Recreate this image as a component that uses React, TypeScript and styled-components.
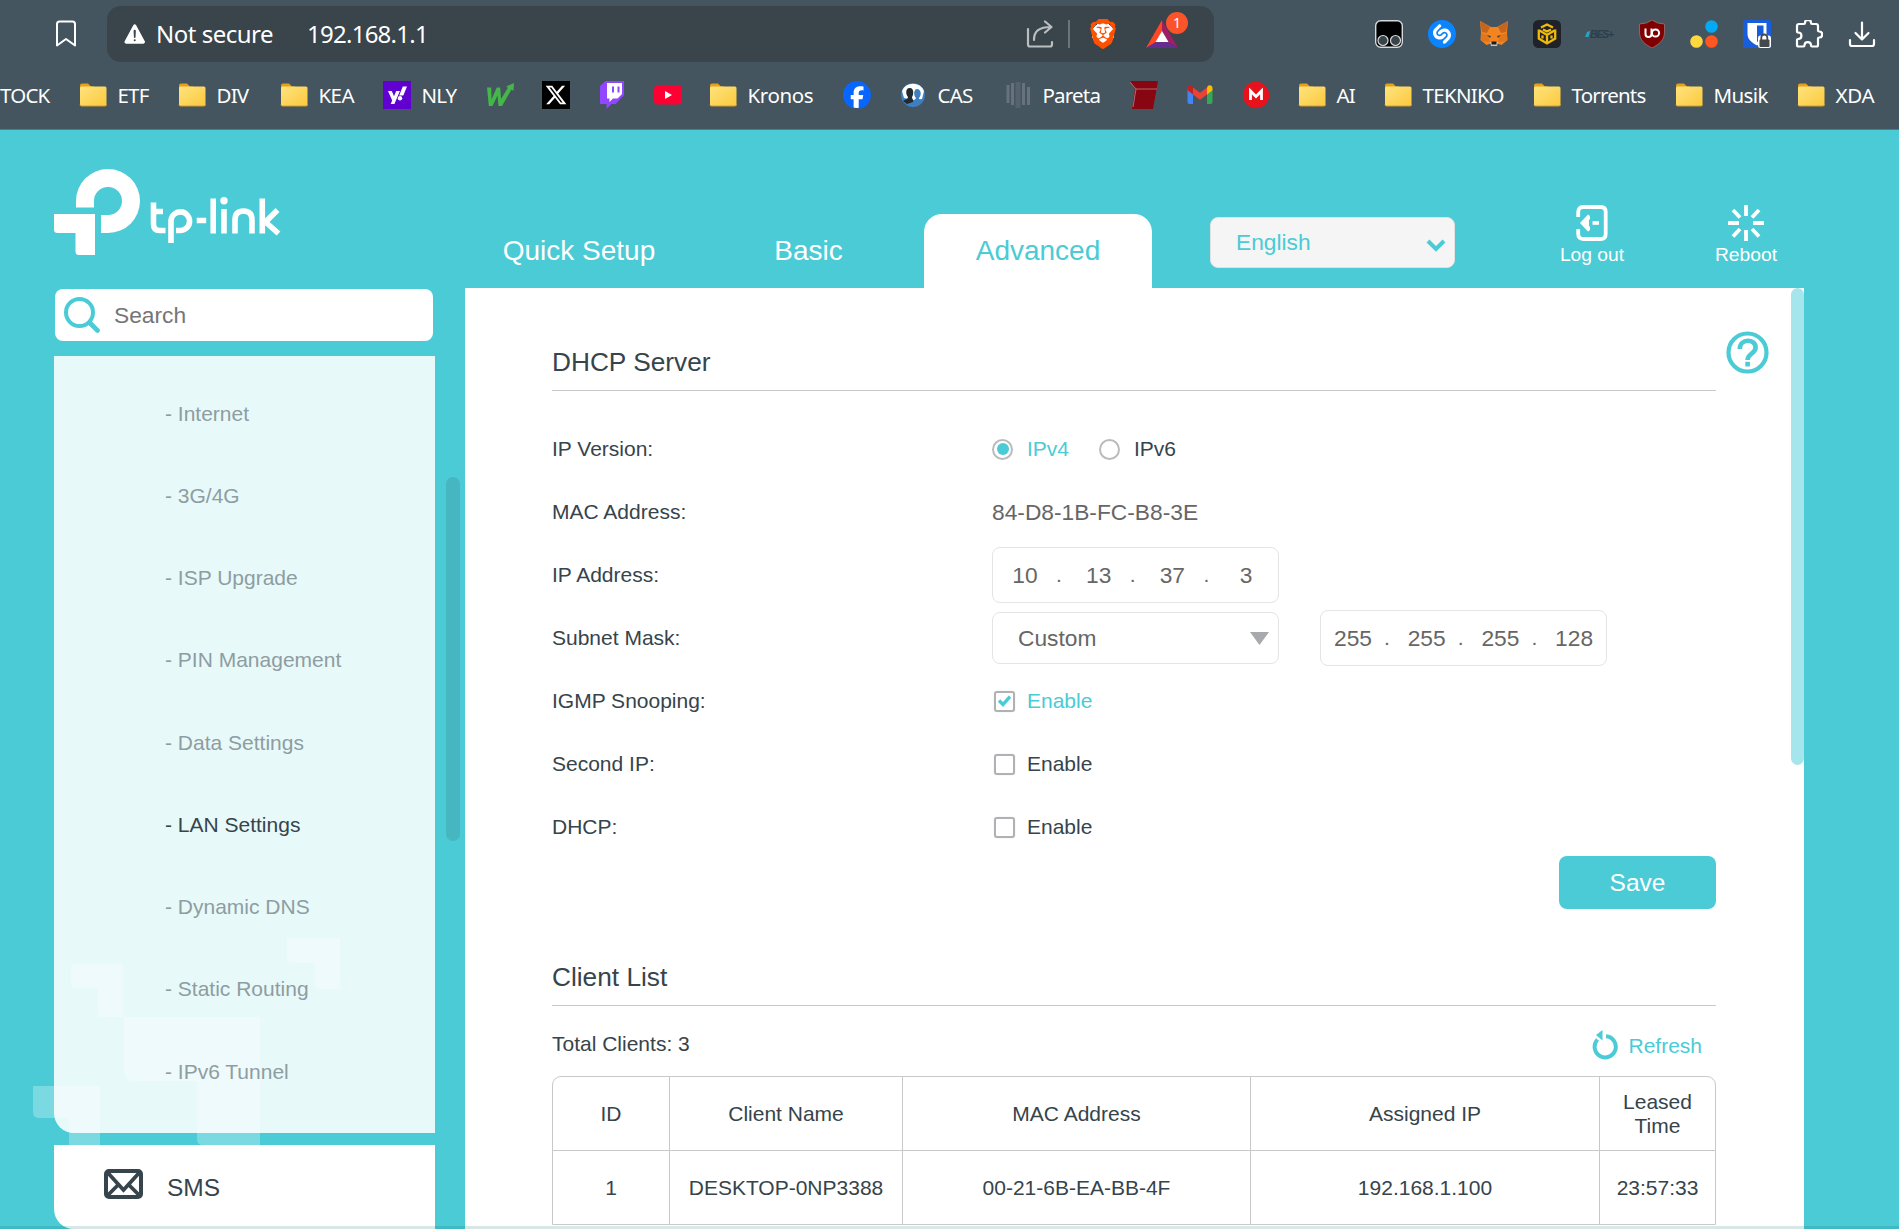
import React from 'react';
import styled, { createGlobalStyle } from 'styled-components';
import { SiBrave, SiShazam } from 'react-icons/si';
import { FaXTwitter, FaFacebook } from 'react-icons/fa6';
import { IoWarning } from 'react-icons/io5';

const teal = '#4acbd6';
const ink = '#36444b';

const Global = createGlobalStyle`
  body { margin: 0; background: ${teal}; overflow: hidden; }
  * { box-sizing: border-box; }
  svg { display: block; }
`;

const Screen = styled.div`
  width: 1899px;
  height: 1229px;
  display: flex;
  flex-direction: column;
  position: relative;
  overflow: hidden;
  background: ${teal};
  font-family: "Liberation Sans", Arial, sans-serif;
  color: ${ink};
`;

/* ---------- browser chrome ---------- */
const Chrome = styled.header`
  height: 130px;
  flex: none;
  background: #44555f;
  border-bottom: 1px solid #647580;
  color: #fff;
  font-family: "Noto Sans", "Open Sans", sans-serif;
`;
const Toolbar = styled.div`
  height: 68px;
  display: flex;
  align-items: center;
  padding-left: 54px;
`;
const AddressBar = styled.div`
  width: 1107px;
  height: 56px;
  margin-left: 29px;
  padding: 0 36px 0 15px;
  border-radius: 14px;
  background: #39444b;
  display: flex;
  align-items: center;
`;
const AddressText = styled.span<{ $gap: number; $fit: number }>`
  margin-left: ${(p) => p.$gap}px;
  font-size: 24px;
  line-height: 30px;
  letter-spacing: ${(p) => p.$fit}px;
  white-space: nowrap;
`;
const AddressActions = styled.div`
  margin-left: auto;
  display: flex;
  align-items: center;
`;
const Divider = styled.i`
  width: 2px;
  height: 28px;
  margin: 0 18px 0 14px;
  background: #69747b;
`;
const Rewards = styled.div`
  position: relative;
  margin-left: 28px;
`;
const Badge = styled.span`
  position: absolute;
  left: 20px;
  top: -8px;
  width: 22px;
  height: 22px;
  border-radius: 50%;
  background: #fb542b;
  font-size: 14px;
  line-height: 22px;
  text-align: center;
`;
const BraveLion = styled(SiBrave)`
  background: radial-gradient(#fff 52%, transparent 54%);
`;
const Extensions = styled.div`
  display: flex;
  align-items: center;
  gap: 24.5px;
  margin-left: 161px;
`;
const Bookmarks = styled.nav`
  height: 54px;
  display: flex;
  align-items: center;
`;
const Bookmark = styled.div<{ $w: number }>`
  width: ${(p) => p.$w}px;
  flex: none;
  display: flex;
  align-items: center;
  white-space: nowrap;
`;
const BookmarkLabel = styled.span<{ $fit: number; $cut?: boolean }>`
  margin-left: ${(p) => (p.$cut ? 0 : 10.5)}px;
  font-size: 20.5px;
  line-height: 28px;
  letter-spacing: ${(p) => p.$fit}px;
`;

/* ---------- router page ---------- */
const Page = styled.div`
  flex: 1;
  min-height: 0;
  display: flex;
  position: relative;
`;
const Backdrop = styled.svg`
  position: absolute;
  left: 0;
  bottom: 0;
`;
const Side = styled.aside`
  width: 465px;
  flex: none;
  padding: 39px 0 0 54px;
  position: relative;
`;
const SearchBox = styled.div`
  width: 378px;
  height: 52px;
  margin: 34px 0 15px 1px;
  padding-left: 9px;
  display: flex;
  align-items: center;
  border-radius: 8px;
  background: #fff;
  color: #757575;
  font-size: 22.75px;
`;
const SearchText = styled.span`
  margin-left: 14px;
`;
const SideScroll = styled.div`
  display: flex;
  width: 406px;
`;
const SubMenu = styled.ul`
  width: 381px;
  height: 777px;
  margin: 0;
  padding: 16.5px 0 0 111px;
  list-style: none;
  border-bottom-left-radius: 20px;
  background: rgba(255, 255, 255, 0.875);
`;
const SubItem = styled.li<{ $active?: boolean }>`
  height: 82.25px;
  line-height: 82.25px;
  font-size: 21px;
  color: ${(p) => (p.$active ? ink : '#8e9da1')};
`;
const SideThumb = styled.div`
  width: 14px;
  height: 364px;
  margin: 121px 0 0 11px;
  border-radius: 7px;
  background: #46b6c1;
`;
const MenuItem = styled.div`
  width: 381px;
  height: 84px;
  margin-top: 12px;
  padding: 0 0 1px 50px;
  display: flex;
  align-items: center;
  border-bottom-left-radius: 20px;
  background: #fff;
  font-size: 24.5px;
  svg { margin-bottom: 6px; }
`;
const MenuText = styled.span`
  margin: 2px 0 0 24px;
`;
const Main = styled.main`
  width: 1339px;
  flex: none;
  display: flex;
  flex-direction: column;
`;
const TopNav = styled.div`
  height: 158px;
  flex: none;
  display: flex;
  align-items: flex-end;
`;
const Tab = styled.div<{ $active?: boolean }>`
  width: 228px;
  height: 74px;
  margin-right: 1.5px;
  padding-top: 1px;
  text-align: center;
  font-size: 28px;
  line-height: 72px;
  border-radius: 18px 18px 0 0;
  color: ${(p) => (p.$active ? teal : '#fff')};
  background: ${(p) => (p.$active ? '#fff' : 'transparent')};
`;
const Language = styled.div`
  width: 245px;
  height: 51px;
  margin: 0 0 20px 56.5px;
  padding: 0 8px 0 25px;
  display: flex;
  align-items: center;
  justify-content: space-between;
  border: 1px solid #e2e2e2;
  border-radius: 8px;
  background: #f5f5f5;
  color: ${teal};
  font-size: 22.75px;
  svg { margin-top: 4px; }
`;
const NavAction = styled.div<{ $gap: number; $w: number }>`
  width: ${(p) => p.$w}px;
  margin: 0 0 22px ${(p) => p.$gap}px;
  display: flex;
  flex-direction: column;
  align-items: center;
  color: #fff;
  font-size: 19.25px;
  line-height: 22px;
  white-space: nowrap;
  svg { margin-bottom: 3px; }
`;
const Panel = styled.div`
  flex: 1;
  display: flex;
  background: #fff;
`;
const Content = styled.div`
  width: 1164px;
  margin-left: 87px;
  padding-top: 58px;
`;
const HelpColumn = styled.div`
  width: 65px;
  margin-left: 10px;
  padding-top: 43px;
`;
const PageThumb = styled.div`
  width: 13px;
  height: 477px;
  border-radius: 7px;
  background: #a4e6eb;
`;
const Title = styled.h2`
  height: 45px;
  margin: 0;
  font-size: 26.25px;
  font-weight: normal;
  line-height: 32px;
  border-bottom: 1px solid #c9c9c9;
`;
const Form = styled.div`
  padding-top: 26.5px;
`;
const Field = styled.div`
  height: 63px;
  display: flex;
  align-items: center;
  font-size: 21px;
`;
const FieldLabel = styled.div`
  width: 440px;
`;
const Choice = styled.label<{ $on?: boolean; $w?: number }>`
  display: flex;
  align-items: center;
  gap: 14px;
  width: ${(p) => (p.$w ? p.$w + 'px' : 'auto')};
  color: ${(p) => (p.$on ? teal : ink)};
`;
const Radio = styled.span<{ $on?: boolean }>`
  width: 21px;
  height: 21px;
  border-radius: 50%;
  border: 2px solid #b9bbbd;
  display: grid;
  place-items: center;
  &::after {
    content: '';
    width: 12px;
    height: 12px;
    border-radius: 50%;
    background: ${(p) => (p.$on ? teal : 'transparent')};
  }
`;
const Check = styled.span`
  width: 21px;
  height: 21px;
  margin: 0 -2px 0 2px;
  border: 2px solid #b0b0b5;
  border-radius: 3px;
  box-shadow: 0 0 1px #c4c4c8;
  display: grid;
  place-items: center;
`;
const Value = styled.div`
  font-size: 22.75px;
  color: #666;
`;
const IpBox = styled.div<{ $gap?: number }>`
  width: 287px;
  height: 56px;
  margin-left: ${(p) => p.$gap ?? 0}px;
  padding-left: 4px;
  display: flex;
  align-items: center;
  border: 1px solid #e4e4e4;
  border-radius: 8px;
  color: #666;
  font-size: 22.75px;
`;
const Octet = styled.span`
  width: 56px;
  text-align: center;
`;
const Dot = styled.span`
  width: 17.7px;
  padding-left: 3px;
  font-size: 21px;
`;
const Select = styled.div`
  width: 287px;
  height: 52px;
  padding: 0 9px 0 25px;
  display: flex;
  align-items: center;
  justify-content: space-between;
  border: 1px solid #e4e4e4;
  border-radius: 8px;
  color: #666;
  font-size: 22.75px;
`;
const Save = styled.button`
  display: block;
  width: 157px;
  height: 53px;
  margin: -2.5px 0 52px auto;
  padding: 0;
  border: 0;
  border-radius: 8px;
  background: ${teal};
  color: #fff;
  font: 24.5px "Liberation Sans", Arial, sans-serif;
`;
const ListBar = styled.div`
  height: 70px;
  padding: 9px 14px 0 0;
  display: flex;
  align-items: center;
  justify-content: space-between;
  font-size: 21px;
`;
const Total = styled.span`
  padding-bottom: 4px;
`;
const Refresh = styled.span`
  display: flex;
  align-items: center;
  gap: 10px;
  color: ${teal};
  svg { margin-bottom: 2px; }
`;
const Table = styled.div`
  border: 1px solid #c9c9c9;
  border-radius: 9px 9px 0 0;
  overflow: hidden;
`;
const Row = styled.div`
  height: 73px;
  display: grid;
  grid-template-columns: 116px 233px 348px 349px 116px;
  & + & {
    height: 74px;
    border-top: 1px solid #c9c9c9;
  }
`;
const Cell = styled.div`
  display: flex;
  align-items: center;
  justify-content: center;
  text-align: center;
  padding: 0 8px;
  font-size: 21px;
  line-height: 24px;
  & + & { border-left: 1px solid #c9c9c9; }
`;
const StatusStrip = styled.div`
  position: absolute;
  left: 0;
  right: 0;
  bottom: 0;
  height: 3px;
  background: rgba(0, 95, 95, 0.15);
`;

/* ---------- icons ---------- */
const Folder = () => (
  <svg width="28" height="28" viewBox="0 0 28 28">
    <defs>
      <linearGradient id="folder" x1="0" y1="0" x2="1" y2="1">
        <stop offset="0" stopColor="#ffe37c" />
        <stop offset="1" stopColor="#fbc93f" />
      </linearGradient>
    </defs>
    <path d="M1 4.500q0-2 2-2h6l3 3h3v6H1z" fill="#e6a118" />
    <rect x="1" y="5.500" width="26.500" height="19.500" rx="1.500" fill="url(#folder)" />
    <path d="M1 23.500q0 1.500 1.500 1.500h23.500q1.500 0 1.500-1.500" stroke="#d69c2a" fill="none" />
  </svg>
);
const Yahoo = () => (
  <svg width="28" height="28" viewBox="0 0 28 28">
    <rect width="28" height="28" fill="#6001d2" />
    <path d="M5 10h3.800l2.200 5.300 2.200-5.300h3.700L11.400 23H7.700l1.500-3.500z" fill="#fff" />
    <path d="M19.800 5.500H24l-3.700 9H16.200z" fill="#fff" />
    <circle cx="17" cy="17.300" r="2.200" fill="#fff" />
  </svg>
);
const GreenW = () => (
  <svg width="28" height="28" viewBox="0 0 28 28">
    <path d="M1 6.500h4.200l.3 12 5.300-12h3.400l.8 11.500 6.800-11-1.500-1.500L28 2l-.5 8-2-1.500L16 25h-3.500l-1-10.500L6.500 25H2.800z" fill="#45b64a" />
  </svg>
);
const XLogo = () => (
  <svg width="28" height="28" viewBox="0 0 28 28">
    <rect width="28" height="28" fill="#000" />
    <FaXTwitter x="2.500" y="2.500" size={23} color="#fff" />
  </svg>
);
const Twitch = () => (
  <svg width="28" height="28" viewBox="0 0 28 28">
    <path d="M7.500 0 2 5v18h6.500v5l5-5h4L26 14V0z" fill="#9146ff" />
    <path d="M9 2h15v11l-4.500 4.500H15L11.500 21v-3.500H9z" fill="#fff" />
    <path d="M14 5.500h2v6h-2zm5.500 0h2v6h-2z" fill="#9146ff" />
  </svg>
);
const YouTube = () => (
  <svg width="28" height="28" viewBox="0 0 28 28">
    <rect y="4.500" width="28" height="19" rx="4" fill="#ff0033" />
    <path d="m11 10 7 4-7 4z" fill="#fff" />
  </svg>
);
const Facebook = () => (
  <svg width="28" height="28" viewBox="0 0 28 28">
    <circle cx="14" cy="14" r="13" fill="#fff" />
    <FaFacebook size={28} color="#0866ff" />
  </svg>
);
const People = () => (
  <svg width="28" height="28" viewBox="0 0 28 28">
    <circle cx="14" cy="14" r="12" fill="#3d7fc0" />
    <path d="M3 10a12 12 0 0 1 22 0l-2 8-9 1-9-2z" fill="#fff" />
    <path d="M4 20c3-2 5-2 5-4-2-2-3-8 1-9 5-1 5 6 3 9 0 2 2 3 1 5l-6 2z" fill="#232b31" />
    <path d="M14 22c0-3 2-3 3-5-3-3-2-9 1-9 4 0 5 6 2 9 0 2 3 2 4 3l-4 4z" fill="#3d7fc0" />
  </svg>
);
const Pillars = () => (
  <svg width="28" height="28" viewBox="0 0 28 28">
    <g stroke="#67727e" strokeWidth="3" fill="none">
      <path d="M4 4v18M8.500 2v22M19.500 2v22M24.500 6v18" />
    </g>
    <path d="M14 1v26" stroke="#56626d" strokeWidth="5" />
  </svg>
);
const RedBlock = () => (
  <svg width="28" height="28" viewBox="0 0 28 28">
    <path d="M0 0h28l-5 28H2l3-20z" fill="#870611" />
    <path d="m0 1 6 7h21M6 8 3 26" stroke="#b46b70" fill="none" />
  </svg>
);
const Gmail = () => (
  <svg width="28" height="28" viewBox="0 0 28 28">
    <path d="M1.500 8v13q0 2 2 2H7V11z" fill="#4285f4" />
    <path d="M26.500 8v13q0 2-2 2H21V11z" fill="#34a853" />
    <path d="M21 6.500v7l5.500-4.200V7c0-2.700-3-3.500-4.500-2.200z" fill="#fbbc04" />
    <path d="m7 13.500 7 5.200 7-5.200v-7l-7 5.200-7-5.200z" fill="#ea4335" />
    <path d="M7 6.500v7L1.500 9.300V7c0-2.700 3-3.500 4.500-2.200z" fill="#c5221f" />
  </svg>
);
const Mega = () => (
  <svg width="28" height="28" viewBox="0 0 28 28">
    <circle cx="14" cy="14" r="13.200" fill="#e8121c" />
    <path d="M8.500 19v-9l5.500 5.500 5.500-5.500v9" stroke="#fff" strokeWidth="2.800" fill="none" />
  </svg>
);
const BookmarkOutline = () => (
  <svg width="24" height="28" viewBox="0 0 24 28">
    <path d="M3 4q0-2.500 2.500-2.500h13Q21 1.500 21 4v21.500l-9-6.500-9 6.500z" stroke="#fff" strokeWidth="2" fill="none" strokeLinejoin="round" />
  </svg>
);
const Share = () => (
  <svg width="28" height="28" viewBox="0 0 28 28" stroke="#b9bec1" strokeWidth="2.200" fill="none" strokeLinecap="round" strokeLinejoin="round">
    <path d="M2 9v15.500q0 2 2 2h20q2 0 2-2V22" />
    <path d="M8 20c0-9 5-13 17-13M19 1.500 25.500 7 19 12.500" />
  </svg>
);
const Bat = () => (
  <svg width="32" height="28" viewBox="0 0 32 28">
    <path d="M16 0 0 28l10-6 6-10z" fill="#ff4724" />
    <path d="m16 0 16 28-10-6-6-10z" fill="#9e1f63" />
    <path d="M0 28h32l-10-6H10z" fill="#662d91" />
    <path d="m16 11 6.500 11h-13z" fill="#fff" />
  </svg>
);
const Tampermonkey = () => (
  <svg width="28" height="28" viewBox="0 0 28 28">
    <rect x=".7" y=".7" width="26.600" height="26.600" rx="5" fill="#000" stroke="#d5d9db" strokeWidth="1.400" />
    <g fill="#38434a" stroke="#d5d9db" strokeWidth="1.200">
      <circle cx="8" cy="20.500" r="5" />
      <circle cx="20.500" cy="20.500" r="5" />
    </g>
  </svg>
);
const Shazam = () => (
  <svg width="28" height="28" viewBox="0 0 28 28">
    <circle cx="14" cy="14" r="13" fill="#fff" />
    <SiShazam size={28} color="#0a85ff" />
  </svg>
);
const Fox = () => (
  <svg width="28" height="28" viewBox="0 0 28 28">
    <path d="m0 1 11 6h6l11-6-1 11 .5 8-6 5-4.500-1.500h-6L6.500 25l-6-5 .5-8z" fill="#f5841f" />
    <path d="m0 1 10 6-3 6-5-1zm28 0L18 7l3 6 5-1z" fill="#c7651c" />
    <path d="m1 13 7 2 2 7-9-1zm26 0-7 2-2 7 9-1z" fill="#e2761b" />
    <path d="m7 15 4 1-1 2zm14 0-4 1 1 2z" fill="#38434a" />
    <path d="M10 22h8l-1 4h-6z" fill="#d7c1b3" />
    <path d="M11.500 21.500h5v3h-5z" fill="#1c1c1c" />
  </svg>
);
const Bnb = () => (
  <svg width="28" height="28" viewBox="0 0 28 28">
    <rect width="28" height="28" rx="5.500" fill="#1f2329" />
    <g stroke="#f0b90b" strokeWidth="2.300" fill="none">
      <path d="m8 7.500 6-3 6 3M5.800 9.500v9l8.200 5 8.200-5v-9" />
      <path d="M6.500 10.500 14 15l7.500-4.500M14 15v8M10 9.500l4 2 4-2M9.500 15.500v3M18.500 15.500v3" />
    </g>
  </svg>
);
const BesBox = styled.span`
  width: 28px;
  height: 28px;
  display: flex;
  align-items: center;
  font: italic bold 10.5px/13px "Liberation Sans", sans-serif;
  letter-spacing: -1.2px;
  color: #2a3f4b;
`;
const Bes = () => (
  <BesBox>
    <svg width="10" height="12" viewBox="0 0 10 12">
      <path d="M0 12 4 2l6-2-3 12z" fill="#27a3c4" />
    </svg>
    BES+
  </BesBox>
);
const UBlock = () => (
  <svg width="28" height="28" viewBox="0 0 28 28">
    <path d="M14 0q5 4 12.500 4v8c0 8-5 12-12.500 16C6.500 24 1.500 20 1.500 12V4Q9 4 14 0z" fill="#800000" stroke="#a37a7e" strokeWidth=".7" />
    <path d="M7.500 8.500v5.500q0 3 3 3t3-3V8.500" stroke="#fff" strokeWidth="2" fill="none" />
    <circle cx="17.500" cy="13" r="3.600" stroke="#fff" strokeWidth="2" fill="none" />
  </svg>
);
const Dots = () => (
  <svg width="28" height="28" viewBox="0 0 28 28">
    <circle cx="21.500" cy="6.500" r="6.300" fill="#03a9f4" />
    <circle cx="6.500" cy="21.500" r="6.300" fill="#ffd83b" />
    <circle cx="21.500" cy="21.500" r="6.300" fill="#ff5722" />
  </svg>
);
const Bitwarden = () => (
  <svg width="28" height="28" viewBox="0 0 28 28">
    <rect width="28" height="28" rx="1.500" fill="#175ddc" />
    <path d="M4.500 3h19v11c0 6-5 9-9.500 11.500C9.500 23 4.500 20 4.500 14z" fill="#fff" />
    <path d="M14 5.500h6.500V14c0 4-3 6-6.500 8z" fill="#175ddc" />
    <rect x="15" y="15.500" width="13" height="12.500" rx="2.500" fill="#fff" />
    <path d="M18.300 20v-2.500a3 3 0 0 1 6 0V20" stroke="#44494d" strokeWidth="1.800" fill="none" />
    <rect x="16.500" y="19.500" width="10" height="7.500" rx="1" fill="#44494d" />
  </svg>
);
const Puzzle = () => (
  <svg width="28" height="28" viewBox="0 0 28 28">
    <path
      d="M4 4h5c1 0 1-.5 1-1.200 0-4 6-4 6 0C16 3.500 16 4 17 4h4q2 0 2 2v4.500c0 1 .5 1 1.200 1 4 0 4 6 0 6-.7 0-1.200 0-1.200 1V25q0 1.500-1.500 1.500H17c-1 0-1-.5-1-1.200 0-4.300-6.500-4.300-6.500 0 0 .7 0 1.200-1 1.200H3.500Q2 26.500 2 25v-5c0-1 .5-1 1.200-1 4.300 0 4.300-6.500 0-6.500C2.500 12.500 2 12.500 2 11.500V6q0-2 2-2z"
      stroke="#fff" strokeWidth="2.200" fill="none" strokeLinejoin="round"
    />
  </svg>
);
const Download = () => (
  <svg width="28" height="28" viewBox="0 0 28 28" stroke="#fff" strokeWidth="2.200" fill="none" strokeLinecap="round" strokeLinejoin="round">
    <path d="M14 2.500v17M7.500 13l6.500 6.500 6.500-6.500M2 20v4q0 2 2 2h20q2 0 2-2v-4" />
  </svg>
);
const Logo = () => (
  <svg width="228" height="86" viewBox="0 0 228 86">
    <g fill="#fff">
      <path d="M22 38.500V32a32 32 0 1 1 32 32h-7V46h7a14 14 0 1 0-14-14v6.500z" />
      <path d="M0 45h41v41H25q-3.500 0-3.500-3.500V64H3.500Q0 64 0 60.500z" />
    </g>
    <g fill="none" stroke="#fff" strokeWidth="5.600">
      <path d="M99.500 33.500V55q0 6.500 6 6.500h6M99 42.500h10" />
      <path d="M117 74V51.500a9.300 9.300 0 1 1 9.300 10H122" />
      <path d="M142.700 51.500h9.500M159.200 29.500v35M170 40v24.500M181 64.500V51q0-9 8.500-9t8.500 9v13.500M208.300 29.500v35M209 53h4M223.500 41l-12 12 13 11.500" />
    </g>
    <circle cx="170" cy="31.700" r="3.700" fill="#fff" />
  </svg>
);
const SearchIcon = () => (
  <svg width="36" height="36" viewBox="0 0 36 36" stroke={teal} strokeWidth="4" fill="none" strokeLinecap="round">
    <circle cx="15.500" cy="15.500" r="13.500" />
    <path d="m26 26 7.500 7.500" strokeWidth="4.600" />
  </svg>
);
const Chevron = () => (
  <svg width="20" height="14" viewBox="0 0 20 14">
    <path d="m2 3 8 8 8-8" stroke={teal} strokeWidth="4" fill="none" />
  </svg>
);
const LogOutIcon = () => (
  <svg width="32" height="36" viewBox="0 0 32 36">
    <path d="M2.200 12V7q0-5 5-5h17.500q5 0 5 5v22q0 5-5 5H7.200q-5 0-5-5v-5" stroke="#fff" strokeWidth="3.800" fill="none" />
    <path d="m4 18 8-8.500q2.500 1 2 4l-1 2v5l1 2q.5 3-2 4z" fill="#fff" />
    <path d="M16.500 18H23" stroke="#fff" strokeWidth="3.600" />
  </svg>
);
const RebootIcon = () => (
  <svg width="36" height="36" viewBox="0 0 36 36" stroke="#fff" strokeWidth="3.800">
    <path d="M18 0v11M18 25v11M0 18h11M25 18h11M5 5l7 7.500M24 24l7 7.500M31 5l-7 7.500M12 24l-7 7.500" />
  </svg>
);
const HelpIcon = () => (
  <svg width="43" height="43" viewBox="0 0 43 43" stroke={teal} strokeWidth="4.600" fill="none">
    <circle cx="21.500" cy="21.500" r="19" strokeWidth="4.200" />
    <path d="M13.800 18c0-11 15.800-10.500 15.800-1.500 0 6-8 6-8 12.500" />
    <path d="M21.600 30.800v4.700" />
  </svg>
);
const RefreshIcon = () => (
  <svg width="26" height="30" viewBox="0 0 26 30">
    <path d="M14 6.200a10.600 10.600 0 1 1-8.500 3.300" stroke={teal} strokeWidth="4" fill="none" />
    <path d="M4 5 10.500 0v10.500z" fill={teal} />
  </svg>
);
const Envelope = () => (
  <svg width="39" height="30" viewBox="0 0 39 30">
    <rect x="2" y="2" width="35" height="26" rx="3" stroke={ink} strokeWidth="4" fill="none" />
    <path d="m4 4 15.500 17L35 4M4 26l10-10M35 26 25 16" stroke={ink} strokeWidth="3.800" fill="none" />
  </svg>
);
const Triangle = () => (
  <svg width="19" height="13" viewBox="0 0 19 13">
    <path d="M0 0h19l-9.500 13z" fill="#a7a9ac" />
  </svg>
);
const Tick = () => (
  <svg width="13" height="12" viewBox="0 0 13 12">
    <path d="m1 5.500 4 4L12 1.500" stroke={teal} strokeWidth="3.400" fill="none" />
  </svg>
);

/* ---------- data ---------- */
type Mark = { icon: React.ReactNode; text?: string; w: number; fit?: number };
const marks: Mark[] = [
  { icon: <Folder />, text: 'ETF', w: 99 },
  { icon: <Folder />, text: 'DIV', w: 102 },
  { icon: <Folder />, text: 'KEA', w: 103, fit: -0.6 },
  { icon: <Yahoo />, text: 'NLY', w: 103 },
  { icon: <GreenW />, w: 56 },
  { icon: <XLogo />, w: 56 },
  { icon: <Twitch />, w: 56 },
  { icon: <YouTube />, w: 55 },
  { icon: <Folder />, text: 'Kronos', w: 134, fit: -0.4 },
  { icon: <Facebook />, w: 56 },
  { icon: <People />, text: 'CAS', w: 105 },
  { icon: <Pillars />, text: 'Pareta', w: 126 },
  { icon: <RedBlock />, w: 56 },
  { icon: <Gmail />, w: 56 },
  { icon: <Mega />, w: 56 },
  { icon: <Folder />, text: 'AI', w: 86 },
  { icon: <Folder />, text: 'TEKNIKO', w: 149, fit: -0.7 },
  { icon: <Folder />, text: 'Torrents', w: 142 },
  { icon: <Folder />, text: 'Musik', w: 122, fit: -0.6 },
  { icon: <Folder />, text: 'XDA', w: 90, fit: -0.3 },
];
const menu = ['Internet', '3G/4G', 'ISP Upgrade', 'PIN Management', 'Data Settings', 'LAN Settings', 'Dynamic DNS', 'Static Routing', 'IPv6 Tunnel'];
const rows = [
  ['ID', 'Client Name', 'MAC Address', 'Assigned IP', 'Leased Time'],
  ['1', 'DESKTOP-0NP3388', '00-21-6B-EA-BB-4F', '192.168.1.100', '23:57:33'],
];

const IpInput = ({ value, gap }: { value: string; gap?: number }) => (
  <IpBox $gap={gap}>
    {value.split('.').map((octet, i) => (
      <React.Fragment key={i}>
        {i > 0 && <Dot>.</Dot>}
        <Octet>{octet}</Octet>
      </React.Fragment>
    ))}
  </IpBox>
);
const Toggle = ({ label, on }: { label: string; on?: boolean }) => (
  <Field>
    <FieldLabel>{label}</FieldLabel>
    <Choice $on={on}>
      <Check>{on && <Tick />}</Check>
      Enable
    </Choice>
  </Field>
);

export default function App() {
  return (
    <Screen>
      <Global />
      <Chrome>
        <Toolbar>
          <BookmarkOutline />
          <AddressBar>
            <IoWarning size={26} />
            <AddressText $gap={8} $fit={-0.5}>Not secure</AddressText>
            <AddressText $gap={34} $fit={-0.75}>192.168.1.1</AddressText>
            <AddressActions>
              <Share />
              <Divider />
              <BraveLion size={30} color="#ff5000" />
              <Rewards>
                <Bat />
                <Badge>1</Badge>
              </Rewards>
            </AddressActions>
          </AddressBar>
          <Extensions>
            <Tampermonkey />
            <Shazam />
            <Fox />
            <Bnb />
            <Bes />
            <UBlock />
            <Dots />
            <Bitwarden />
            <Puzzle />
            <Download />
          </Extensions>
        </Toolbar>
        <Bookmarks>
          <Bookmark $w={79}>
            <BookmarkLabel $fit={-0.8} $cut>TOCK</BookmarkLabel>
          </Bookmark>
          {marks.map((m, i) => (
            <Bookmark key={i} $w={m.w}>
              {m.icon}
              {m.text && <BookmarkLabel $fit={m.fit ?? -0.8}>{m.text}</BookmarkLabel>}
            </Bookmark>
          ))}
        </Bookmarks>
      </Chrome>

      <Page>
        <Backdrop width="465" height="300" viewBox="0 929 465 300" fill="#fff" fillOpacity=".265">
          <path d="M33 1086h67v143H69v-111H39q-6 0-6-6z" />
          <path d="M124 1017h136v128h-57q-6 0-6-6v-58h-63q-10 0-10-10z" />
          <path d="M71 964h52v53h-21q-4 0-4-4v-25H75q-4 0-4-4z" />
          <path d="M287 938h53v51h-21q-4 0-4-4v-22h-23q-5 0-5-5z" />
          <path d="M150 1226h45v3h-45z" />
        </Backdrop>
        <Side>
          <Logo />
          <SearchBox>
            <SearchIcon />
            <SearchText>Search</SearchText>
          </SearchBox>
          <SideScroll>
            <SubMenu>
              {menu.map((m) => (
                <SubItem key={m} $active={m === 'LAN Settings'}>- {m}</SubItem>
              ))}
            </SubMenu>
            <SideThumb />
          </SideScroll>
          <MenuItem>
            <Envelope />
            <MenuText>SMS</MenuText>
          </MenuItem>
        </Side>

        <Main>
          <TopNav>
            <Tab>Quick Setup</Tab>
            <Tab>Basic</Tab>
            <Tab $active>Advanced</Tab>
            <Language>
              English
              <Chevron />
            </Language>
            <NavAction $gap={105} $w={64}>
              <LogOutIcon />
              Log out
            </NavAction>
            <NavAction $gap={90} $w={64}>
              <RebootIcon />
              Reboot
            </NavAction>
          </TopNav>
          <Panel>
            <Content>
              <Title>DHCP Server</Title>
              <Form>
                <Field>
                  <FieldLabel>IP Version:</FieldLabel>
                  <Choice $on $w={107}>
                    <Radio $on />
                    IPv4
                  </Choice>
                  <Choice>
                    <Radio />
                    IPv6
                  </Choice>
                </Field>
                <Field>
                  <FieldLabel>MAC Address:</FieldLabel>
                  <Value>84-D8-1B-FC-B8-3E</Value>
                </Field>
                <Field>
                  <FieldLabel>IP Address:</FieldLabel>
                  <IpInput value="10.13.37.3" />
                </Field>
                <Field>
                  <FieldLabel>Subnet Mask:</FieldLabel>
                  <Select>
                    Custom
                    <Triangle />
                  </Select>
                  <IpInput value="255.255.255.128" gap={41} />
                </Field>
                <Toggle label="IGMP Snooping:" on />
                <Toggle label="Second IP:" />
                <Toggle label="DHCP:" />
              </Form>
              <Save>Save</Save>
              <Title>Client List</Title>
              <ListBar>
                <Total>Total Clients: 3</Total>
                <Refresh>
                  <RefreshIcon />
                  Refresh
                </Refresh>
              </ListBar>
              <Table>
                {rows.map((r) => (
                  <Row key={r[0]}>
                    {r.map((c) => (
                      <Cell key={c}>{c}</Cell>
                    ))}
                  </Row>
                ))}
              </Table>
            </Content>
            <HelpColumn>
              <HelpIcon />
            </HelpColumn>
            <PageThumb />
          </Panel>
        </Main>
      </Page>
      <StatusStrip />
    </Screen>
  );
}
